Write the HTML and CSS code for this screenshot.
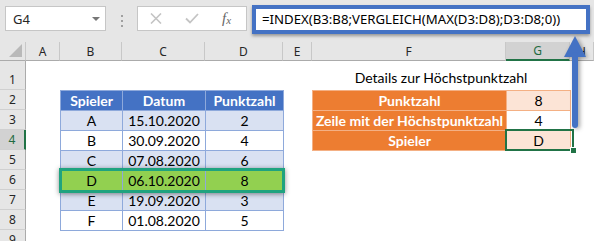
FILE: index.html
```html
<!DOCTYPE html>
<html>
<head>
  <link rel="stylesheet" href="styles.css">
</head>
<body>
  <div class="app">
    <div class="toolbar">
      <div class="namebox"><span>G4</span><span class="caret"></span></div>
      <div class="grip"><i></i><i></i><i></i></div>
      <div class="fxbox">
        <svg class="ico-x" width="12" height="11" viewBox="0 0 12 11"><path d="M1 0.5 L11 10.5 M11 0.5 L1 10.5" stroke="#c4c4c4" stroke-width="1.6" fill="none"/></svg>
        <svg class="ico-ok" width="14" height="11" viewBox="0 0 14 11"><path d="M1 5.5 L5 9.5 L13 1" stroke="#c4c4c4" stroke-width="1.8" fill="none"/></svg>
        <span class="fx">f<sub>x</sub></span>
      </div>
      <div class="formula">=INDEX(B3:B8;VERGLEICH(MAX(D3:D8);D3:D8;0))</div>
    </div>

    <div class="sheet">
      <div class="corner"><span class="tri"></span></div>
      <div class="colheads">
        <div class="ch">A</div>
        <div class="ch">B</div>
        <div class="ch">C</div>
        <div class="ch">D</div>
        <div class="ch">E</div>
        <div class="ch">F</div>
        <div class="ch sel">G</div>
        <div class="ch">H</div>
      </div>
      <div class="rowheads">
        <div class="rh first">1</div>
        <div class="rh">2</div>
        <div class="rh">3</div>
        <div class="rh sel">4</div>
        <div class="rh">5</div>
        <div class="rh">6</div>
        <div class="rh">7</div>
        <div class="rh">8</div>
        <div class="rh">9</div>
      </div>

      <div class="cells">
        <div class="title">Details zur Höchstpunktzahl</div>

        <div class="tbl scores">
          <div class="th">Spieler</div><div class="th">Datum</div><div class="th">Punktzahl</div>
          <div class="td band">A</div><div class="td band">15.10.2020</div><div class="td band">2</div>
          <div class="td">B</div><div class="td">30.09.2020</div><div class="td">4</div>
          <div class="td band">C</div><div class="td band">07.08.2020</div><div class="td band">6</div>
          <div class="td best">D</div><div class="td best">06.10.2020</div><div class="td best">8</div>
          <div class="td band">E</div><div class="td band">19.09.2020</div><div class="td band">3</div>
          <div class="td">F</div><div class="td">01.08.2020</div><div class="td">5</div>
          <div class="frame"></div>
        </div>

        <div class="tbl details">
          <div class="lbl">Punktzahl</div><div class="val peach">8</div>
          <div class="lbl">Zeile mit der Höchstpunktzahl</div><div class="val">4</div>
          <div class="lbl">Spieler</div><div class="val peach">D</div>
          <div class="cursor"><span class="handle"></span></div>
        </div>
      </div>
    </div>

    <svg class="arrow" width="34" height="104" viewBox="0 0 34 104">
      <path d="M17 6 L28 27 L6 27 Z" fill="#4472c4"/>
      <rect x="14" y="22" width="6" height="76" rx="3" fill="#4472c4"/>
    </svg>
  </div>
</body>
</html>
```

FILE: styles.css
```css
body {
  margin: 0;
  background: #fff;
  font-family: "Lato", "Liberation Sans", sans-serif;
}
.app {
  position: relative;
  width: 594px;
  height: 241px;
  overflow: hidden;
  --cols: 34px 62px 83px 78px 29px 194px 64px 24px;
}

/* formula bar */
.toolbar {
  display: flex;
  align-items: flex-start;
  height: 42px;
  background: #e6e6e6;
  font-family: "Noto Sans", "Open Sans", sans-serif;
}
.namebox {
  display: flex;
  align-items: center;
  justify-content: space-between;
  box-sizing: border-box;
  width: 101px;
  height: 25px;
  margin: 6px 0 0 5px;
  padding: 0 5px 0 7px;
  background: #fff;
  border: 1px solid #c6c6c6;
  font-size: 13px;
  color: #262626;
}
.caret {
  border-left: 4px solid transparent;
  border-right: 4px solid transparent;
  border-top: 4px solid #777;
}
.grip {
  display: flex;
  flex-direction: column;
  align-items: center;
  gap: 3px;
  width: 31px;
  padding-top: 15px;
}
.grip i {
  width: 2px;
  height: 2px;
  background: #a0a0a0;
}
.fxbox {
  display: flex;
  align-items: center;
  box-sizing: border-box;
  width: 110px;
  height: 25px;
  margin-top: 6px;
  padding-left: 12px;
  background: #fff;
  border: 1px solid #c6c6c6;
}
.ico-ok {
  margin-left: 23px;
}
.fx {
  margin-left: 23px;
  font-family: "Liberation Serif", serif;
  font-style: italic;
  font-size: 15px;
  color: #666;
}
.fx sub {
  font-size: 11px;
  vertical-align: -1px;
}
.formula {
  box-sizing: border-box;
  width: 338px;
  height: 29px;
  margin: 5px 0 0 5px;
  padding-left: 6px;
  background: #fff;
  border: 4px solid #4472c4;
  box-shadow: 0 2px 3px rgba(0, 0, 0, 0.35);
  font-size: 13.2px;
  line-height: 21px;
  color: #000;
  white-space: nowrap;
}

/* sheet */
.sheet {
  display: grid;
  grid-template-columns: 26px 1fr;
  grid-template-rows: 19px 1fr;
}
.corner {
  display: flex;
  align-items: flex-end;
  justify-content: flex-end;
  padding: 0 3px 3px 0;
  background: #e6e6e6;
  border-right: 1px solid #c8c8c8;
  border-bottom: 1px solid #ababab;
}
.tri {
  border-left: 13px solid transparent;
  border-bottom: 13px solid #b9b9b9;
}
.colheads {
  display: grid;
  grid-template-columns: var(--cols);
}
.ch {
  display: flex;
  align-items: center;
  justify-content: center;
  box-sizing: border-box;
  background: #e6e6e6;
  border-right: 1px solid #c8c8c8;
  border-bottom: 1px solid #ababab;
  font-family: "Noto Sans", "Open Sans", sans-serif;
  font-size: 12px;
  color: #262626;
}
.ch.sel {
  background: #d2d2d2;
  color: #1e6b41;
  border-bottom: 2px solid #217346;
}
.rowheads {
  display: grid;
  grid-template-rows: 29px repeat(8, 20px);
}
.rh {
  display: flex;
  align-items: center;
  justify-content: center;
  box-sizing: border-box;
  background: #e6e6e6;
  border-right: 1px solid #ababab;
  border-bottom: 1px solid #d0d0d0;
  font-family: "Noto Sans", "Open Sans", sans-serif;
  font-size: 12px;
  color: #262626;
}
.rh.first {
  align-items: flex-end;
  padding-bottom: 1px;
}
.rh.sel {
  background: #d2d2d2;
  color: #1e6b41;
  border-right: 2px solid #217346;
}
.cells {
  display: grid;
  grid-template-columns: var(--cols);
  grid-template-rows: 29px repeat(8, 20px);
  font-size: 14px;
}
.title {
  grid-column: 6 / 8;
  grid-row: 1;
  align-self: end;
  padding-bottom: 4px;
  text-align: center;
}

/* tables */
.tbl {
  position: relative;
  display: grid;
  grid-auto-rows: 20px;
  align-self: start;
  justify-self: start;
}
.tbl > div {
  display: flex;
  align-items: center;
  justify-content: center;
  box-sizing: border-box;
  white-space: nowrap;
}
.scores {
  grid-column: 2 / 5;
  grid-row: 2 / 9;
  grid-template-columns: 62px 83px 78px;
  border-right: 1px solid #8ea9db;
  border-bottom: 1px solid #8ea9db;
}
.scores .th,
.scores .td {
  border-left: 1px solid #8ea9db;
  border-top: 1px solid #8ea9db;
}
.scores .th {
  background: #4472c4;
  color: #fff;
  font-weight: bold;
}
.scores .band {
  background: #d9e1f2;
}
.scores .best {
  background: #92d050;
}
.scores .frame {
  position: absolute;
  left: -1px;
  top: 78px;
  width: 226px;
  height: 25px;
  border: 3px solid #1fa37f;
  box-shadow: 0 1px 5px rgba(0, 0, 0, 0.45);
}
.details {
  grid-column: 6 / 8;
  grid-row: 2 / 5;
  grid-template-columns: 194px 64px;
  border-right: 1px solid #f4b084;
  border-bottom: 1px solid #f4b084;
}
.details .lbl,
.details .val {
  border-left: 1px solid #f4b084;
  border-top: 1px solid #f4b084;
}
.details .lbl {
  background: #ed7d31;
  color: #fff;
  font-weight: bold;
}
.details .peach {
  background: #fce4d6;
}
.details .cursor {
  position: absolute;
  left: 193px;
  top: 39px;
  width: 69px;
  height: 22px;
  border: 2px solid #217346;
}
.cursor .handle {
  position: absolute;
  right: -4px;
  bottom: -4px;
  width: 5px;
  height: 5px;
  background: #217346;
  border-left: 1px solid #fff;
  border-top: 1px solid #fff;
}

.arrow {
  position: absolute;
  left: 558px;
  top: 30px;
  filter: drop-shadow(2px 1px 2px rgba(0, 0, 0, 0.35));
}
```
